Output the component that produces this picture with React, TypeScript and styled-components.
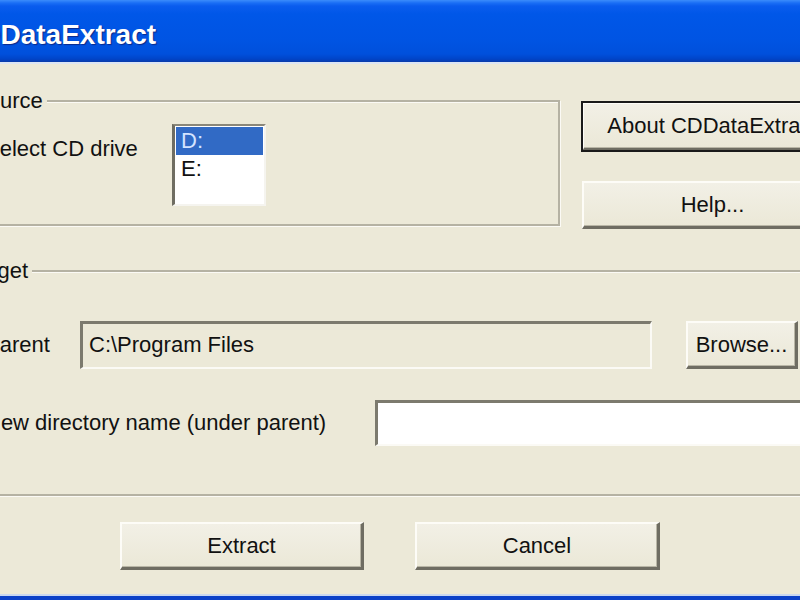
import React from 'react';
import styled, { createGlobalStyle } from 'styled-components';

const GlobalStyle = createGlobalStyle`
    html, body {
        margin: 0;
        padding: 0;
        width: 800px;
        height: 600px;
        overflow: hidden;
        background: #ece9d8;
        font-family: "Liberation Sans", Arial, sans-serif;
    }
`;

const drives = ['D:', 'E:'];

const App: React.FC = () => {
    return (
        <>
            <GlobalStyle />
            <Window>
                <TitleBar>
                    <Title>CDDataExtract</Title>
                </TitleBar>
                <Body>
                    <TopRow>
                        <GroupBox $width={610}>
                            <Legend $indent={21}>Source</Legend>
                            <SourceRow>
                                <FieldLabel $width={187} $top={12}>Select CD drive</FieldLabel>
                                <ListBox>
                                    {drives.map((d, i) => (
                                        <ListItem key={d} $selected={i === 0}>{d}</ListItem>
                                    ))}
                                </ListBox>
                            </SourceRow>
                        </GroupBox>
                        <SideButtons>
                            <PushButton $default $width={262} $height={49}>About CDDataExtract</PushButton>
                            <PushButton $width={262}>Help...</PushButton>
                        </SideButtons>
                    </TopRow>
                    <GroupBox $width={930} $top={29}>
                        <Legend $indent={15}>Target</Legend>
                        <TargetRows>
                            <FormRow>
                                <FieldLabel $width={95}>Parent</FieldLabel>
                                <TextField $width={572} $disabled>C:\Program Files</TextField>
                                <PushButton $width={112}>Browse...</PushButton>
                            </FormRow>
                            <FormRow>
                                <FieldLabel $width={390}>New directory name (under parent)</FieldLabel>
                                <TextField $width={486} $height={46} />
                            </FormRow>
                        </TargetRows>
                    </GroupBox>
                    <ActionRow>
                        <PushButton $width={244}>Extract</PushButton>
                        <PushButton $width={245}>Cancel</PushButton>
                    </ActionRow>
                </Body>
                <BottomFrame />
            </Window>
        </>
    );
};

export default App;

const Window = styled.div`
    width: 940px;
    margin-left: -60px;
    display: flex;
    flex-direction: column;
    color: #111;
    font-size: 22px;
`;

const TitleBar = styled.div`
    height: 62px;
    padding-left: 20px;
    background: linear-gradient(
        #3b8cfb 0px,
        #1a6ef5 3px,
        #0a5cee 6px,
        #0057e8 14px,
        #0054e3 40px,
        #0050dc 54px,
        #0044c8 59px,
        #0a3aa8 62px
    );
`;

const Title = styled.div`
    padding-top: 19px;
    line-height: 32px;
    font-size: 28px;
    font-weight: bold;
    color: #fff;
    text-shadow: 1px 1px 1px #0b2a8a;
`;

const Body = styled.div`
    height: 506px;
    border-top: 2px solid #dce5f3;
    padding: 24px 0 0 10px;
    display: flex;
    flex-direction: column;
`;

const TopRow = styled.div`
    display: flex;
    align-items: flex-start;
    gap: 22px;
`;

const GroupBox = styled.fieldset<{ $width: number; $top?: number }>`
    width: ${p => p.$width}px;
    box-sizing: border-box;
    margin: ${p => p.$top ?? 0}px 0 0 0;
    padding: 0;
    min-width: 0;
    border: 2px solid #b5b2a3;
    box-shadow: inset 1px 1px 0 #fbfaf5, 1px 1px 0 #fbfaf5;
`;

const Legend = styled.legend<{ $indent: number }>`
    margin-left: ${p => p.$indent - 4}px;
    padding: 0 4px;
    line-height: 26px;
    background: #ece9d8;
`;

const SourceRow = styled.div`
    display: flex;
    align-items: flex-start;
    padding: 10px 0 18px 33px;
`;

const FieldLabel = styled.div<{ $width: number; $top?: number }>`
    width: ${p => p.$width}px;
    flex-shrink: 0;
    margin-top: ${p => p.$top ?? 0}px;
    line-height: 26px;
    white-space: nowrap;
`;

const ListBox = styled.div`
    width: 94px;
    height: 82px;
    box-sizing: border-box;
    padding: 1px;
    background: #fff;
    border-style: solid;
    border-width: 2px 2px 2px 3px;
    border-color: #8a877a #f5f4ef #f5f4ef #6f6d62;
`;

const ListItem = styled.div<{ $selected?: boolean }>`
    height: 28px;
    line-height: 28px;
    padding-left: 5px;
    background: ${p => (p.$selected ? '#316ac5' : 'transparent')};
    color: ${p => (p.$selected ? '#d4e4ff' : '#111')};
`;

const SideButtons = styled.div`
    margin-top: 14px;
    display: flex;
    flex-direction: column;
    gap: 30px;
`;

const PushButton = styled.button<{ $width: number; $height?: number; $default?: boolean }>`
    width: ${p => p.$width}px;
    height: ${p => p.$height ?? 48}px;
    flex-shrink: 0;
    box-sizing: border-box;
    padding: 0;
    font-family: inherit;
    font-size: 22px;
    color: #111;
    background: linear-gradient(#f2f0e6, #ebe8d7);
    border-style: solid;
    border-width: 2px 3px 3px 2px;
    border-color: #fdfcf7 #6f6d62 #6f6d62 #fdfcf7;
    box-shadow: inset -1px -1px 0 #b9b6a6;
    ${p => p.$default && `
        outline: 2px solid #1a1a1a;
        outline-offset: -1px;
    `}
`;

const TargetRows = styled.div`
    display: flex;
    flex-direction: column;
    gap: 31px;
    padding: 37px 0 48px 33px;
`;

const FormRow = styled.div`
    display: flex;
    align-items: center;
    gap: 0;
    & > button {
        margin-left: 34px;
    }
`;

const TextField = styled.div<{ $width: number; $height?: number; $disabled?: boolean }>`
    width: ${p => p.$width}px;
    height: ${p => p.$height ?? 48}px;
    flex-shrink: 0;
    box-sizing: border-box;
    padding-left: 6px;
    line-height: 42px;
    background: ${p => (p.$disabled ? '#ece9d8' : '#fff')};
    border-style: solid;
    border-width: 3px 2px 2px 3px;
    border-color: #7c7a6e #fbfaf5 #fbfaf5 #7c7a6e;
    white-space: nowrap;
`;

const ActionRow = styled.div`
    display: flex;
    gap: 51px;
    margin: 26px 0 0 170px;
`;

const BottomFrame = styled.div`
    height: 6px;
    border-top: 2px solid #c9d7ef;
    background: #0a40c8;
`;
